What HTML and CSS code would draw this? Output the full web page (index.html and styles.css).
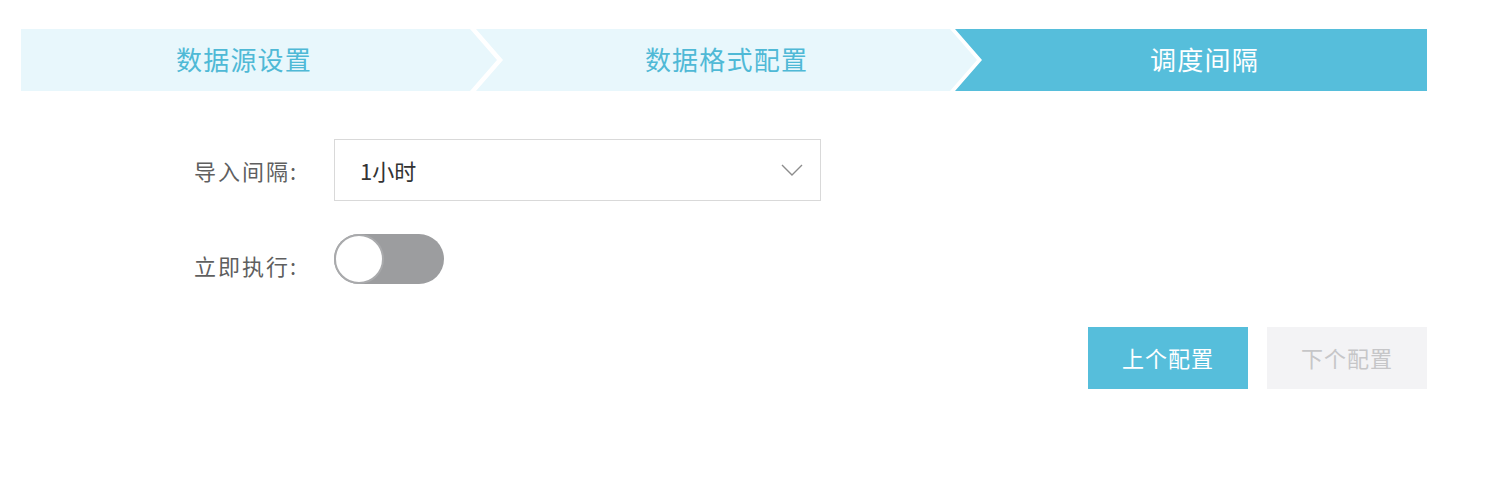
FILE: index.html
```html
<!DOCTYPE html>
<html lang="zh">
<head>
<meta charset="utf-8">
<title>调度间隔</title>
<link rel="stylesheet" href="styles.css">
</head>
<body>
<div class="page">
  <div class="steps">
    <div class="step step-first">数据源设置</div>
    <div class="step step-mid">数据格式配置</div>
    <div class="step step-last active">调度间隔</div>
  </div>

  <div class="form">
    <div class="row">
      <label class="label">导入间隔:</label>
      <div class="select">
        <span class="select-value">1小时</span>
        <svg class="chevron" width="22" height="12" viewBox="0 0 22 12"><polyline points="1,1 11,11 21,1" fill="none" stroke="#8c8c8c" stroke-width="1.4"/></svg>
      </div>
    </div>
    <div class="row row-switch">
      <label class="label label-switch">立即执行:</label>
      <div class="switch"><div class="knob"></div></div>
    </div>
  </div>

  <div class="actions">
    <button class="btn btn-primary">上个配置</button>
    <button class="btn btn-disabled">下个配置</button>
  </div>
</div>
</body>
</html>
```

FILE: styles.css
```css
html, body {
  margin: 0;
  padding: 0;
  background: #ffffff;
}

body {
  font-family: "Noto Sans CJK SC", "Noto Sans", sans-serif;
}

.page {
  width: 1406px;
  margin-left: 21px;
  padding-top: 29px;
}

.steps {
  display: flex;
  height: 62px;
}

.step {
  display: flex;
  align-items: center;
  justify-content: center;
  background: #e8f7fc;
  color: #4fb9d6;
  font-size: 26px;
  letter-spacing: 1.2px;
  box-sizing: border-box;
  padding-bottom: 3px;
}

.step-first {
  width: 476px;
  padding-right: 30px;
  clip-path: polygon(0 0, calc(100% - 27px) 0, 100% 50%, calc(100% - 27px) 100%, 0 100%);
}

.step-mid {
  width: 501px;
  margin-left: -21px;
  padding-left: 27px;
  padding-right: 27px;
  clip-path: polygon(0 0, calc(100% - 27px) 0, 100% 50%, calc(100% - 27px) 100%, 0 100%, 27px 50%);
}

.step-last {
  width: 472px;
  margin-left: -22px;
  padding-left: 27px;
  clip-path: polygon(0 0, 100% 0, 100% 100%, 0 100%, 27px 50%);
}

.step.active {
  background: #56bedb;
  color: #ffffff;
}

.form {
  padding-top: 48px;
  display: flex;
  flex-direction: column;
  gap: 33px;
}

.row {
  display: flex;
  align-items: center;
}

.label {
  width: 313px;
  padding-right: 36px;
  box-sizing: border-box;
  text-align: right;
  font-size: 22px;
  letter-spacing: 2px;
  color: #5f5f5f;
}

.label-switch {
  padding-top: 12px;
}

.select {
  width: 487px;
  height: 62px;
  box-sizing: border-box;
  border: 1px solid #d9d9d9;
  display: flex;
  align-items: center;
  justify-content: space-between;
  padding: 0 17px 0 25px;
}

.select-value {
  font-size: 22px;
  color: #333333;
}

.switch {
  width: 110px;
  height: 50px;
  border-radius: 25px;
  background: #9c9d9f;
  display: flex;
  align-items: center;
}

.knob {
  width: 50px;
  height: 50px;
  box-sizing: border-box;
  border-radius: 50%;
  background: #ffffff;
  border: 2px solid #a9aaac;
}

.actions {
  display: flex;
  justify-content: flex-end;
  gap: 19px;
  padding-top: 43px;
}

.btn {
  width: 160px;
  height: 62px;
  border: none;
  font-family: inherit;
  font-size: 22px;
  letter-spacing: 1px;
  padding: 0 0 2px 0;
}

.btn-primary {
  background: #56bedb;
  color: #ffffff;
}

.btn-disabled {
  background: #f3f3f5;
  color: #c6c6c8;
}
```
